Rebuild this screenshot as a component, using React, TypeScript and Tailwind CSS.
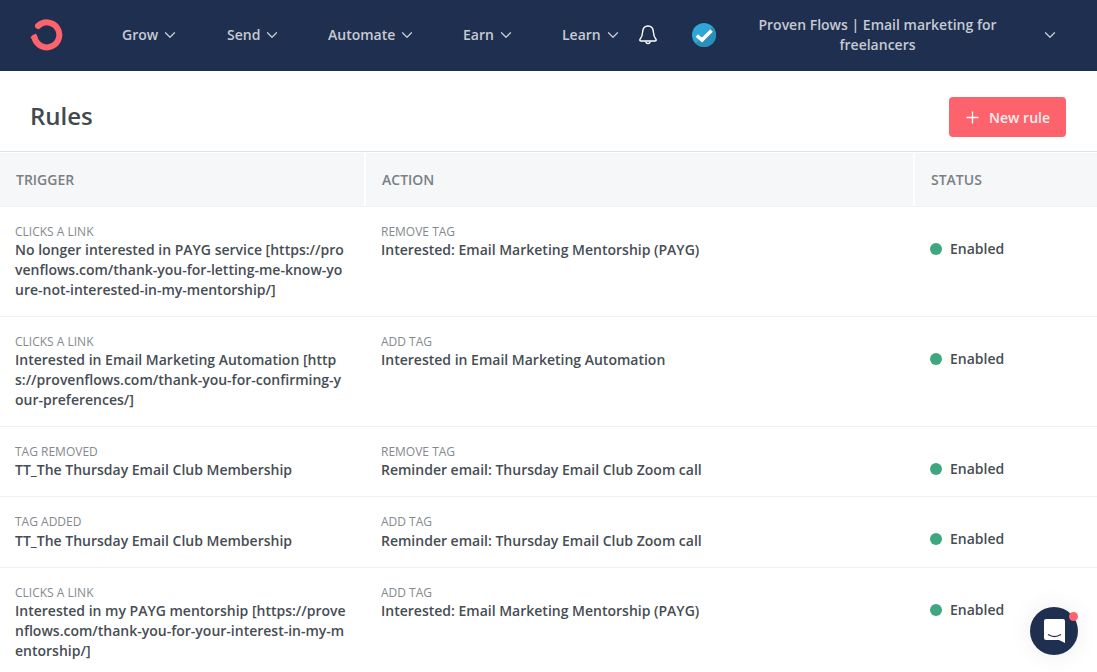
import { ChevronDown } from "lucide-react";

const font = { fontFamily: '"Open Sans", sans-serif' };

const rows = [
  ["CLICKS A LINK", "No longer interested in PAYG service [https://provenflows.com/thank-you-for-letting-me-know-youre-not-interested-in-my-mentorship/]", "REMOVE TAG", "Interested: Email Marketing Mentorship (PAYG)"],
  ["CLICKS A LINK", "Interested in Email Marketing Automation [https://provenflows.com/thank-you-for-confirming-your-preferences/]", "ADD TAG", "Interested in Email Marketing Automation"],
  ["TAG REMOVED", "TT_The Thursday Email Club Membership", "REMOVE TAG", "Reminder email: Thursday Email Club Zoom call"],
  ["TAG ADDED", "TT_The Thursday Email Club Membership", "ADD TAG", "Reminder email: Thursday Email Club Zoom call"],
  ["CLICKS A LINK", "Interested in my PAYG mentorship [https://provenflows.com/thank-you-for-your-interest-in-my-mentorship/]", "ADD TAG", "Interested: Email Marketing Mentorship (PAYG)"],
];

function NavItem({ label, className }: { label: string; className: string }) {
  return (
    <div className={`flex items-center gap-[3px] text-[14px] font-semibold text-[#c6cad2] ${className}`}>
      <span>{label}</span>
      <ChevronDown size={18} strokeWidth={1.7} />
    </div>
  );
}

function Logo() {
  return (
    <svg width="33" height="32" viewBox="0 0 33 32" fill="none">
      <path d="M8 7 A12.5 12.5 0 1 1 4.6 18.5" stroke="#fd636c" strokeWidth="6" strokeLinecap="round" />
      <path d="M0.5 18 L6 14.5 L8 20 L4 24 Z" fill="#fd636c" />
    </svg>
  );
}

export default function App() {
  return (
    <div className="relative h-[672px] w-[1097px] overflow-hidden bg-white text-[#40474d]" style={font}>
      <header className="flex h-[71px] items-center bg-[#1f2f4f] pb-[2px]">
        <div className="ml-[30px] flex w-[92px] shrink-0 items-center"><Logo /></div>
        <NavItem label="Grow" className="w-[105px]" />
        <NavItem label="Send" className="w-[101px]" />
        <NavItem label="Automate" className="w-[135px]" />
        <NavItem label="Earn" className="w-[99px]" />
        <NavItem label="Learn" className="w-[77px]" />
        <svg width="18" height="20" viewBox="0 0 18 20" fill="none" stroke="white" strokeWidth="1.4" strokeLinejoin="round" className="shrink-0">
          <path d="M9 1 C 5.2 1 3.8 3.8 3.6 7 C 3.4 10.5 3 12 1.2 14 C 0.4 15 0.9 16 2 16 L 16 16 C 17.1 16 17.6 15 16.8 14 C 15 12 14.6 10.5 14.4 7 C 14.2 3.8 12.8 1 9 1 Z" />
          <path d="M7 16.5 C 7 19.3 11 19.3 11 16.5" />
        </svg>
        <svg width="24" height="24" viewBox="0 0 24 24" className="ml-[35px] shrink-0">
          <circle cx="12" cy="12" r="12" fill="#2ea6d8" />
          <path d="M20.5 3.5 A12 12 0 0 1 3.5 20.5 Z" fill="#2a8fbb" />
          <path d="M4.8 12.5 L10 17 L19.5 7.5" fill="none" stroke="white" strokeWidth="3.6" />
        </svg>
        <div className="ml-[14px] w-[295px] shrink-0 px-[22px] text-center text-[14px] font-semibold leading-[20px] text-[#c6cad2]">
          Proven Flows | Email marketing for freelancers
        </div>
        <ChevronDown size={18} strokeWidth={1.7} className="ml-[16px] shrink-0 text-[#c6cad2]" />
      </header>

      <div className="flex h-[81px] items-center justify-between border-b border-[#dfe1e3] pl-[30px] pr-[31px] pt-[12px]">
        <h1 className="mb-[2px] text-[24px] font-semibold text-[#42494f]">Rules</h1>
        <button className="flex h-[40px] w-[117px] items-center gap-[10px] rounded-[4px] bg-[#fd636c] pl-[17px] text-[14px] font-semibold text-[#ffecec]">
          <svg width="13" height="13" viewBox="0 0 13 13" stroke="white" strokeWidth="1.3"><path d="M6.5 0.5V12.5M0.5 6.5H12.5" /></svg>
          New rule
        </button>
      </div>

      <div className="grid h-[55px] grid-cols-[366px_549px_1fr] border-b border-[#f0f1f2] pt-[1px] text-[14px] font-semibold text-[#7b8084]">
        <div className="mr-[2px] flex items-center bg-[#f6f7f8] pl-[16px]">TRIGGER</div>
        <div className="mr-[2px] flex items-center bg-[#f6f7f8] pl-[16px]">ACTION</div>
        <div className="flex items-center bg-[#f6f7f8] pl-[16px]">STATUS</div>
      </div>

      {rows.map((r, i) => {
        const label = i === 3 ? "text-[12px] leading-[18px] text-[#85898d]" : "text-[12px] leading-[17px] text-[#85898d]";
        return (
          <div key={i} className="grid grid-cols-[366px_549px_1fr] border-b border-[#eff0f1] py-[16px]">
            <div className="pl-[15px] pr-[20px]">
              <div className={label}>{r[0]}</div>
              <div className="break-all text-[14px] font-semibold leading-[20px] text-[#464d53]">{r[1]}</div>
            </div>
            <div className="pl-[15px] pr-[20px]">
              <div className={label}>{r[2]}</div>
              <div className="text-[14px] font-semibold leading-[20px] text-[#464d53]">{r[3]}</div>
            </div>
            <div className="mt-[15px] flex h-[20px] items-center gap-[8px] pl-[15px] text-[14px] font-semibold text-[#464d53]">
              <span className="mt-[2px] h-[12px] w-[12px] rounded-full bg-[#3fa780]" />
              Enabled
            </div>
          </div>
        );
      })}

      <div className="absolute left-[1030px] top-[607px] flex h-[48px] w-[48px] items-center justify-center rounded-full bg-[#1f2f4f] shadow-[0_0_24px_rgba(0,0,0,0.08)]">
        <svg width="21" height="24" viewBox="0 0 21 24">
          <path d="M2 0 H19 A2 2 0 0 1 21 2 V24 L15 21 H2 A2 2 0 0 1 0 19 V2 A2 2 0 0 1 2 0 Z" fill="white" />
          <path d="M4 15.5 C 8 18 13 18 17 15.5" fill="none" stroke="#1f2f4f" strokeWidth="1.2" />
        </svg>
        <span className="absolute right-0 top-[5px] h-[9px] w-[9px] rounded-full bg-[#fd636c]" />
      </div>
    </div>
  );
}
